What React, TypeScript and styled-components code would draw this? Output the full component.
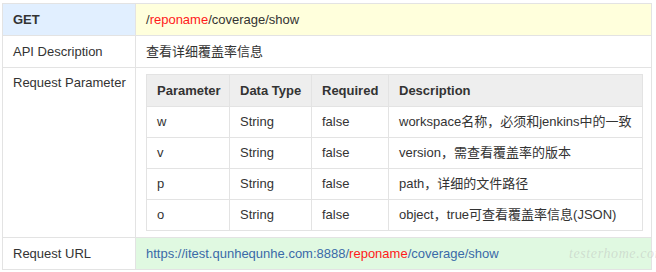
import styled, { createGlobalStyle } from "styled-components";

const Global = createGlobalStyle`
  *, *::before, *::after { box-sizing: border-box; }
  body {
    margin: 0;
    background: #fff;
    font-family: "Liberation Sans", Arial, "Noto Sans CJK SC", sans-serif;
    font-size: 13px;
    color: #333;
  }
`;

const Page = styled.div`
  position: relative;
  width: 656px;
  height: 272px;
  padding: 3px 0 0 2px;
  overflow: hidden;
`;

const ApiTable = styled.table`
  width: 650px;
  border-collapse: collapse;
  table-layout: fixed;
`;

type Tone = "plain" | "blue" | "yellow" | "green";

const toneBg: Record<Tone, string> = {
  plain: "#fff",
  blue: "#e1efff",
  yellow: "#ffffdc",
  green: "#e0f9e1",
};

const Cell = styled.td<{ $tone?: Tone; $bold?: boolean; $top?: boolean; $w?: number }>`
  width: ${(p) => (p.$w ? `${p.$w}px` : "auto")};
  border: 1px solid #e3e3e3;
  padding: ${(p) => (p.$top ? "6px 10px 6px" : "7px 10px")};
  line-height: 17px;
  vertical-align: top;
  white-space: nowrap;
  background: ${(p) => toneBg[p.$tone || "plain"]};
  font-weight: ${(p) => (p.$bold ? "bold" : "normal")};
`;

const Red = styled.span`
  color: #ff1a1a;
`;

const Link = styled.span`
  color: #3a6aa8;
`;

const ParamTable = styled.table`
  width: 496px;
  border-collapse: collapse;
  table-layout: fixed;
`;

const Th = styled.th<{ $w: number }>`
  width: ${(p) => p.$w}px;
  text-align: left;
  font-weight: bold;
  background: #eeeeee;
  border: 1px solid #e3e3e3;
  padding: 7px 10px 7px;
  line-height: 17px;
`;

const Td = styled.td`
  border: 1px solid #e3e3e3;
  padding: 7px 10px;
  line-height: 16px;
  white-space: nowrap;
`;

// faint site watermark in the lower right corner, runs off the edge like the source
const Watermark = styled.div`
  position: absolute;
  left: 569px;
  top: 246px;
  font-family: "Liberation Serif", serif;
  font-style: italic;
  font-size: 14px;
  letter-spacing: 0.6px;
  color: rgba(185, 185, 185, 0.45);
  white-space: nowrap;
  pointer-events: none;
`;

const params = [
  { name: "w", type: "String", req: "false", desc: "workspace名称，必须和jenkins中的一致" },
  { name: "v", type: "String", req: "false", desc: "version，需查看覆盖率的版本" },
  { name: "p", type: "String", req: "false", desc: "path，详细的文件路径" },
  { name: "o", type: "String", req: "false", desc: "object，true可查看覆盖率信息(JSON)" },
];

export default function App() {
  return (
    <Page>
      <Global />
      <ApiTable>
        <tbody>
          <tr>
            <Cell $tone="blue" $bold $w={133}>GET</Cell>
            <Cell $tone="yellow">
              /<Red>reponame</Red>/coverage/show
            </Cell>
          </tr>
          <tr>
            <Cell>API Description</Cell>
            <Cell>查看详细覆盖率信息</Cell>
          </tr>
          <tr>
            <Cell $top>Request Parameter</Cell>
            <Cell $top>
              <ParamTable>
                <thead>
                  <tr>
                    <Th $w={83}>Parameter</Th>
                    <Th $w={82}>Data Type</Th>
                    <Th $w={77}>Required</Th>
                    <Th $w={254}>Description</Th>
                  </tr>
                </thead>
                <tbody>
                  {params.map((p) => (
                    <tr key={p.name}>
                      <Td>{p.name}</Td>
                      <Td>{p.type}</Td>
                      <Td>{p.req}</Td>
                      <Td>{p.desc}</Td>
                    </tr>
                  ))}
                </tbody>
              </ParamTable>
            </Cell>
          </tr>
          <tr>
            <Cell>Request URL</Cell>
            <Cell $tone="green">
              <Link>
                https://itest.qunhequnhe.com:8888/<Red>reponame</Red>/coverage/show
              </Link>
            </Cell>
          </tr>
        </tbody>
      </ApiTable>
      <Watermark>testerhome.com</Watermark>
    </Page>
  );
}
